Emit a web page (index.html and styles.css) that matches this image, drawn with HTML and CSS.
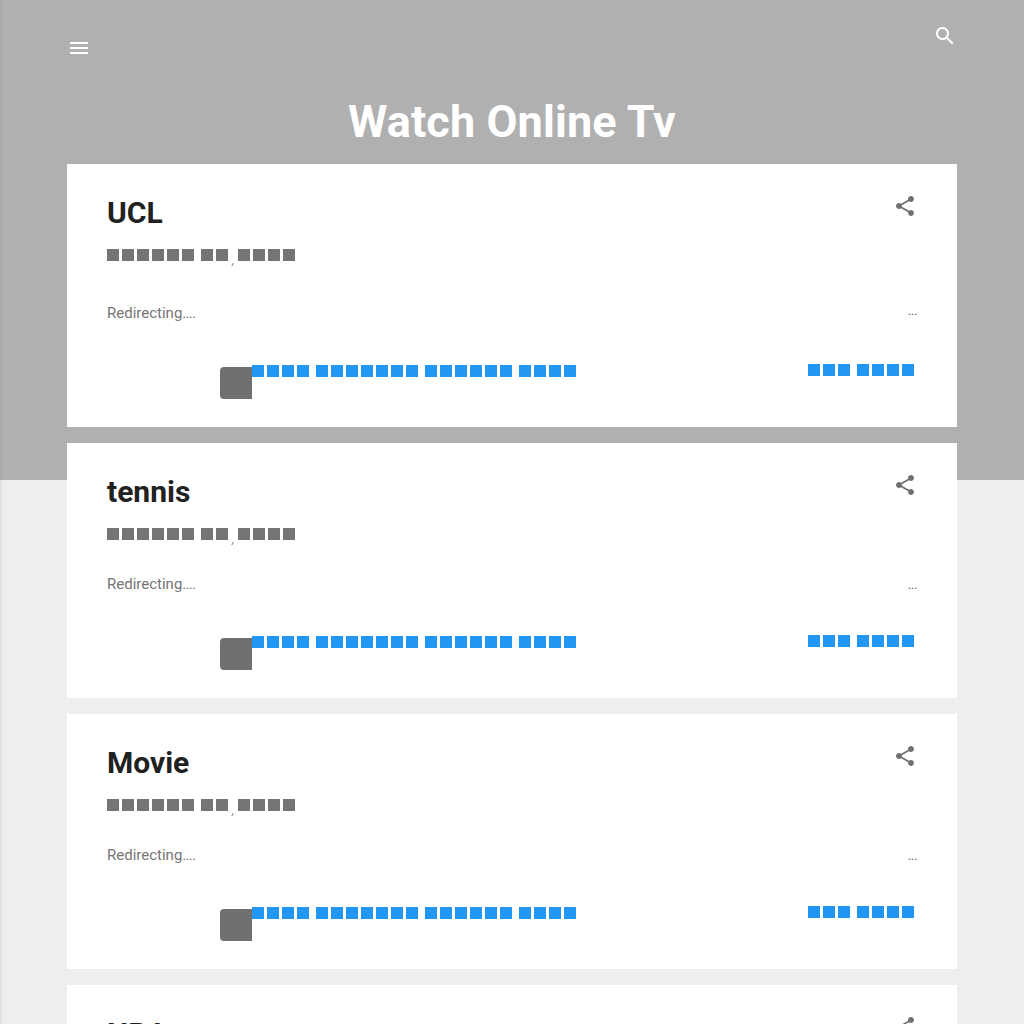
FILE: index.html
```
<!DOCTYPE html>
<html lang="en">
<head>
<meta charset="utf-8">
<title>Watch Online Tv</title>
<link rel="stylesheet" href="styles.css">
</head>
<body>
<svg width="0" height="0" class="defs">
  <symbol id="share" viewBox="0 0 24 24"><path d="M18 16.08c-.76 0-1.44.3-1.96.77L8.91 12.7c.05-.23.09-.46.09-.7s-.04-.47-.09-.7l7.05-4.11c.54.5 1.25.81 2.04.81 1.66 0 3-1.34 3-3s-1.34-3-3-3-3 1.34-3 3c0 .24.04.47.09.7L8.04 9.81C7.5 9.31 6.79 9 6 9c-1.66 0-3 1.34-3 3s1.34 3 3 3c.79 0 1.5-.31 2.04-.81l7.12 4.16c-.05.21-.08.43-.08.65 0 1.61 1.31 2.92 2.92 2.92s2.92-1.31 2.92-2.92-1.31-2.92-2.92-2.92z"/></symbol>
</svg>
<div class="sidebar"></div>
<div class="page">
  <header class="top">
    <svg class="menu" viewBox="0 0 24 24"><path d="M3 18h18v-2H3v2zm0-5h18v-2H3v2zm0-7v2h18V6H3z"/></svg>
    <svg class="search" viewBox="0 0 24 24"><path d="M15.5 14h-.79l-.28-.27C15.41 12.59 16 11.11 16 9.5 16 5.91 13.09 3 9.5 3S3 5.91 3 9.5 5.91 16 9.5 16c1.61 0 3.09-.59 4.23-1.57l.27.28v.79l5 4.99L20.49 19l-4.99-5zm-6 0C7.01 14 5 11.99 5 9.5S7.01 5 9.5 5 14 7.01 14 9.5 11.99 14 9.5 14z"/></svg>
  </header>
  <h1 class="site-title">Watch Online Tv</h1>
  <main class="posts">
    <article class="post featured">
      <div class="head"><h2>UCL</h2><svg class="share"><use href="#share"/></svg></div>
      <div class="date"><i class="word n6"></i><i class="word n2"></i><span class="comma">,</span><i class="word n4"></i></div>
      <div class="snippet"><span>Redirecting<span class="dots">....</span></span><span class="more dots">...</span></div>
      <div class="actions"><span class="thumb"></span><div class="link comments"><i class="word n4"></i><i class="word n7"></i><i class="word n6"></i><i class="word n4"></i></div><div class="link read"><i class="word n3"></i><i class="word n4"></i></div></div>
    </article>
    <article class="post">
      <div class="head"><h2>tennis</h2><svg class="share"><use href="#share"/></svg></div>
      <div class="date"><i class="word n6"></i><i class="word n2"></i><span class="comma">,</span><i class="word n4"></i></div>
      <div class="snippet"><span>Redirecting<span class="dots">....</span></span><span class="more dots">...</span></div>
      <div class="actions"><span class="thumb"></span><div class="link comments"><i class="word n4"></i><i class="word n7"></i><i class="word n6"></i><i class="word n4"></i></div><div class="link read"><i class="word n3"></i><i class="word n4"></i></div></div>
    </article>
    <article class="post">
      <div class="head"><h2>Movie</h2><svg class="share"><use href="#share"/></svg></div>
      <div class="date"><i class="word n6"></i><i class="word n2"></i><span class="comma">,</span><i class="word n4"></i></div>
      <div class="snippet"><span>Redirecting<span class="dots">....</span></span><span class="more dots">...</span></div>
      <div class="actions"><span class="thumb"></span><div class="link comments"><i class="word n4"></i><i class="word n7"></i><i class="word n6"></i><i class="word n4"></i></div><div class="link read"><i class="word n3"></i><i class="word n4"></i></div></div>
    </article>
    <article class="post">
      <div class="head"><h2>NBA</h2><svg class="share"><use href="#share"/></svg></div>
    </article>
  </main>
</div>
</body>
</html>
```
FILE: styles.css
```
* { box-sizing: border-box; }
body {
  margin: 0;
  height: 1024px;
  overflow: hidden;
  font: 15px/22px Roboto, sans-serif;
  color: #757575;
  background: linear-gradient(#b0b0b0 480px, #eee 480px);
}
.defs { position: absolute; }
/* Off-canvas drawer; only its shadow reaches the viewport. */
.sidebar {
  position: fixed;
  top: 0;
  left: -280px;
  width: 280px;
  height: 1100px;
  box-shadow: 0 2px 2px rgba(0,0,0,.06), 0 1px 4px rgba(0,0,0,.1);
}
.page { width: 890px; height: 1024px; margin: 0 auto; overflow: hidden; }
.top { display: flex; justify-content: space-between; height: 92px; padding-top: 24px; }
.top svg { width: 24px; height: 24px; fill: #fff; }
.menu { margin-top: 12px; }
.site-title {
  height: 60px;
  margin: 0 0 12px;
  font-size: 45px;
  line-height: 60px;
  font-weight: 700;
  letter-spacing: .1px;
  text-align: center;
  color: #fff;
}
.posts { display: flex; flex-direction: column; gap: 16px; }
.post { height: 255px; padding: 30px 40px 0; background: #fff; flex: none; }
.featured { height: 263px; }
.head { display: flex; justify-content: space-between; height: 38px; }
.head h2 { margin: 0; font-size: 30px; line-height: 38px; font-weight: 700; color: #212121; }
.share { width: 24px; height: 24px; fill: #707070; }
.date { display: flex; gap: 4px; height: 12px; margin-top: 17px; color: #757575; }
.comma { width: 2px; margin: 0 0 0 -3px; line-height: 20px; font-style: italic; font-weight: 300; }
.word {
  display: block;
  flex: none;
  height: 12px;
  background: repeating-linear-gradient(90deg, currentColor 0 12px, transparent 12px 15px);
}
.n2 { width: 30px; }
.n3 { width: 45px; }
.n4 { width: 60px; }
.n6 { width: 90px; }
.n7 { width: 105px; }
.snippet { display: flex; justify-content: space-between; height: 22px; margin-top: 33px; }
.featured .snippet { margin-top: 41px; }
.dots { letter-spacing: -.75px; }
.featured .more { margin-top: -3px; }
.actions { display: flex; height: 36px; margin-top: 40px; padding-left: 113px; }
.thumb { width: 32px; height: 32px; margin-top: 3px; background: #707070; border-radius: 4px 0 0 4px; }
.link { display: flex; gap: 4px; color: #2196f3; }
.comments { margin-top: 1px; }
.read { margin-left: auto; }
```
